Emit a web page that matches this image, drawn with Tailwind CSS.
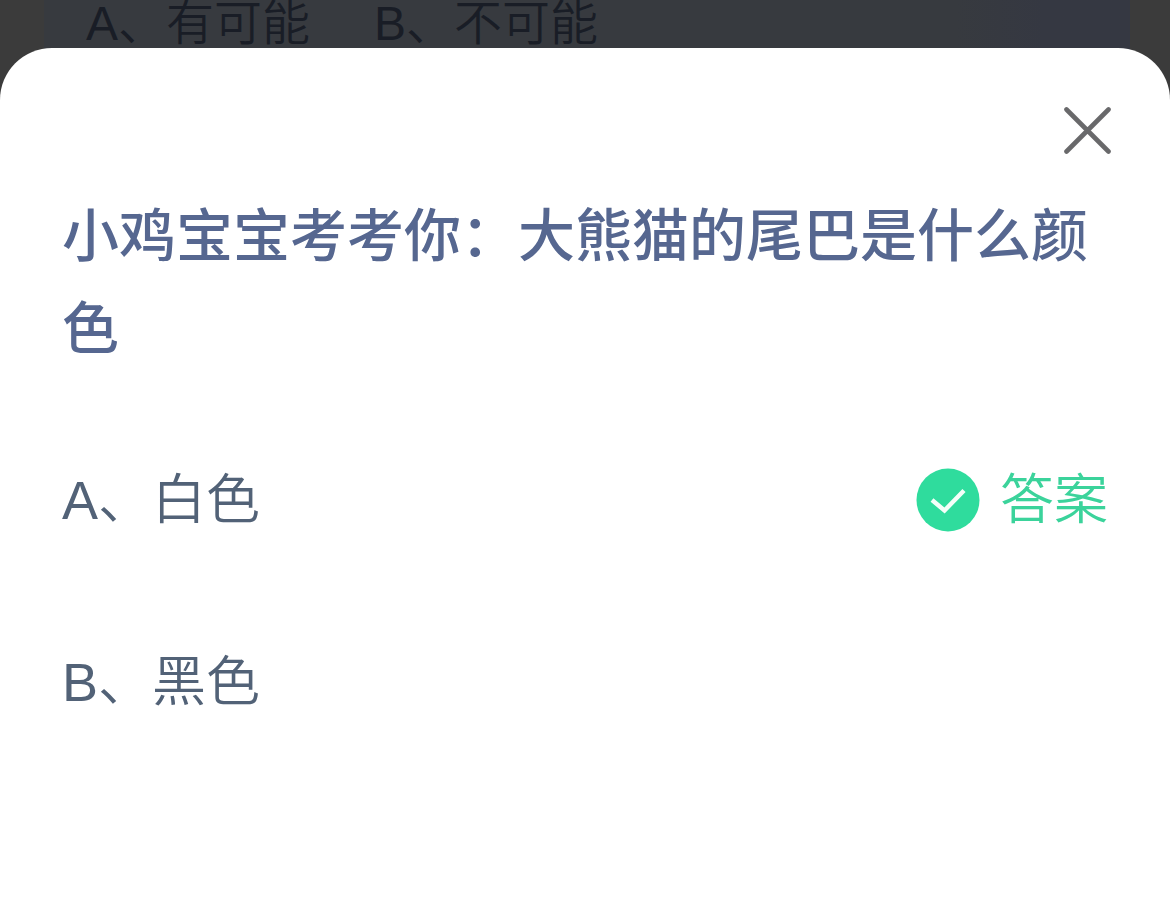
<!DOCTYPE html>
<html lang="zh-CN">
<head>
  <meta charset="UTF-8" />
  <meta name="viewport" content="width=device-width, initial-scale=1.0"/>
  <title>小鸡宝宝考考你</title>
  <script src="https://cdn.jsdelivr.net/npm/@tailwindcss/browser@4"></script>
</head>
<body class="bg-[#3b3b3b] min-h-screen flex flex-col font-['Liberation_Sans','Noto_Sans_CJK_SC',sans-serif]">

  <!-- Dimmed question card behind the sheet -->
  <div class="ml-11 mr-10 h-24 px-[42px] bg-linear-to-r from-[#373a3f] from-84% to-[#353842] to-92%">
    <p class="flex gap-16 text-5xl leading-[48px] font-[350] text-[#191d26]">
      <span>A、有可能</span>
      <span>B、不可能</span>
    </p>
  </div>

  <!-- Question sheet -->
  <main class="-mt-12 flex-1 bg-white rounded-t-[52px] px-[62px] pt-[58px] pb-12">
    <div class="flex justify-end">
      <button type="button" aria-label="关闭" class="-mr-1 cursor-pointer">
        <svg class="size-12" viewBox="0 0 48 48" fill="none" stroke="#69696b" stroke-width="4.600" stroke-linecap="round">
          <path d="M2.500 3.500L44.500 45.500M44.500 3.500L2.500 45.500" />
        </svg>
      </button>
    </div>

    <h1 class="mt-9 text-[57px] leading-[93px] font-medium text-[#566790]">小鸡宝宝考考你：大熊猫的尾巴是什么颜色</h1>

    <!-- Options -->
    <ul class="mt-[84px] space-y-[102px] text-[54px] leading-[80px] font-[350] text-[#526277]">
      <li class="flex items-center justify-between">
        <span>A、白色</span>
        <span class="flex items-center gap-5 text-[#3bd39b]">
          <svg class="size-16" viewBox="0 0 64 64" fill="none">
            <circle cx="32" cy="32" r="31.5" fill="#2fdc9d" />
            <path d="M16 32L28.500 42.500L48 22.500" stroke="#f4fff9" stroke-width="4.400" />
          </svg>
          答案
        </span>
      </li>
      <li>B、黑色</li>
    </ul>
  </main>

</body>
</html>
